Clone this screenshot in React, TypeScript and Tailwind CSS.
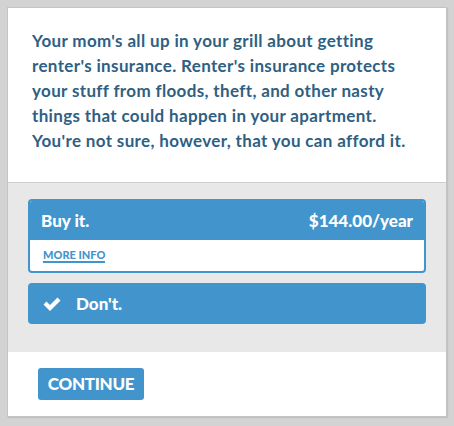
export default function App() {
  return (
    <div className="h-[426px] w-[454px] bg-[#d3d3d3] p-[7px] font-['Lato','Liberation_Sans',sans-serif]">
      <div className="flex h-[410px] flex-col border border-[#c4c4c4] bg-white shadow-[1px_1px_1px_rgba(0,0,0,0.08)]">
        <div className="px-[24px] pb-[29px] pt-[20px]">
          <p className="text-[17px] font-bold leading-[25px] tracking-[0.35px] text-[#2f5f82]">
            Your mom's all up in your grill about getting
            <br />
            renter's insurance. Renter's insurance protects
            <br />
            your stuff from floods, theft, and other nasty
            <br />
            things that could happen in your apartment.
            <br />
            You're not sure, however, that you can afford it.
          </p>
        </div>

        <div className="flex flex-col gap-[10px] border-t border-[#cfcfcf] bg-[#e8e8e8] px-[20px] pb-[28px] pt-[16px]">
          <div className="overflow-hidden rounded-[4px] border-2 border-[#4195cc] bg-white">
            <div className="flex h-[39px] items-center justify-between bg-[#4195cc] px-[11px] text-[17px] font-black text-white">
              <span>Buy it.</span>
              <span>$144.00/year</span>
            </div>
            <div className="flex h-[31px] items-center px-[13px]">
              <a className="border-b-2 border-[#4195cc] text-[11px] font-black uppercase leading-[13px] text-[#4195cc]">
                More info
              </a>
            </div>
          </div>

          <div className="flex h-[41px] items-center gap-[15px] rounded-[4px] bg-[#4195cc] px-[15px] text-[17px] font-black text-white">
            <svg width="18" height="16" viewBox="0 0 18 16" fill="white">
              <path d="M0.5 8.5 L3.5 5.5 L7 9 L14.5 1.5 L17.5 4.5 L7 15 Z" />
            </svg>
            <span>Don't.</span>
          </div>
        </div>

        <div className="px-[30px] pt-[16px]">
          <button className="h-[32px] w-[106px] rounded-[3px] bg-[#4195cc] text-[17px] font-black uppercase tracking-[-0.3px] text-white">
            Continue
          </button>
        </div>
      </div>
    </div>
  );
}
